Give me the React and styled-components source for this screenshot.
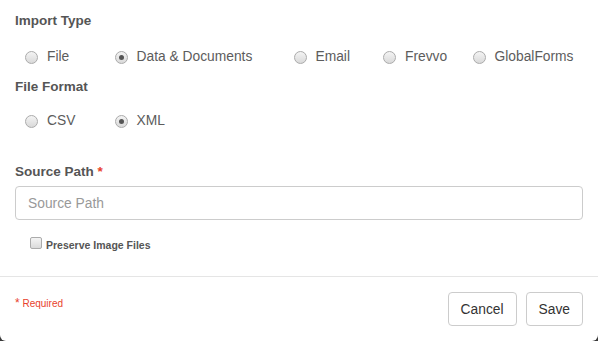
import React, { useState } from "react";
import styled, { createGlobalStyle } from "styled-components";

const GlobalStyle = createGlobalStyle`
  html, body {
    margin: 0;
    padding: 0;
    background: #3a3a3a;
  }
  body {
    font-family: "Liberation Sans", Arial, sans-serif;
  }
`;

const importTypes = [
  { label: "File", span: 1 },
  { label: "Data & Documents", span: 2 },
  { label: "Email", span: 1 },
  { label: "Frevvo", span: 1 },
  { label: "GlobalForms", span: 1 },
];

const formats = [
  { label: "CSV", span: 1 },
  { label: "XML", span: 1 },
];

const RadioGroup = ({ items, value, onChange, top, gap }) => (
  <RadioRow $top={top} $gap={gap}>
    {items.map((item) => (
      <RadioOption key={item.label} $span={item.span} onClick={() => onChange(item.label)}>
        <RadioDot $checked={value === item.label} />
        <RadioText>{item.label}</RadioText>
      </RadioOption>
    ))}
  </RadioRow>
);

const App = () => {
  const [importType, setImportType] = useState("Data & Documents");
  const [format, setFormat] = useState("XML");
  const [preserve, setPreserve] = useState(false);

  return (
    <>
      <GlobalStyle />
      <Modal>
        <Body>
          <SectionTitle>Import Type</SectionTitle>
          <RadioGroup items={importTypes} value={importType} onChange={setImportType} top={20} gap={14} />
          <SectionTitle>File Format</SectionTitle>
          <RadioGroup items={formats} value={format} onChange={setFormat} top={18} gap={0} />
          <FieldLabel>
            Source Path <Star>*</Star>
          </FieldLabel>
          <TextInput placeholder="Source Path" />
          <CheckRow onClick={() => setPreserve(!preserve)}>
            <CheckBox $checked={preserve} />
            <CheckText>Preserve Image Files</CheckText>
          </CheckRow>
        </Body>
        <Footer>
          <RequiredNote>
            <span>*</span> Required
          </RequiredNote>
          <Buttons>
            <Button>Cancel</Button>
            <Button>Save</Button>
          </Buttons>
        </Footer>
      </Modal>
    </>
  );
};
export default App;

const Modal = styled.div`
  width: 598px;
  height: 341px;
  background: #fff;
  border-radius: 0 0 6px 6px;
  display: flex;
  flex-direction: column;
  color: #555;
`;

const Body = styled.div`
  padding: 13px 15px 0 15px;
  height: 263px;
  border-bottom: 1px solid #e5e5e5;
`;

const SectionTitle = styled.div`
  font-size: 13.5px;
  font-weight: bold;
  line-height: 16px;
  color: #555;
`;

const RadioRow = styled.div`
  display: grid;
  grid-template-columns: repeat(6, 89.5px);
  padding: ${(props) => props.$top}px 0 0 10px;
  height: 36px;
  box-sizing: border-box;
  margin-bottom: ${(props) => props.$gap}px;
`;

const RadioOption = styled.label`
  grid-column: span ${(props) => props.$span};
  display: flex;
  align-items: center;
  height: 16px;
  cursor: pointer;
`;

const RadioDot = styled.span`
  width: 11px;
  height: 11px;
  border-radius: 50%;
  border: 1px solid #ababab;
  background: linear-gradient(#f4f4f4, #d9d9d9);
  margin-right: 9px;
  position: relative;
  flex-shrink: 0;

  &::after {
    content: "";
    display: ${(props) => (props.$checked ? "block" : "none")};
    position: absolute;
    left: 3px;
    top: 3px;
    width: 5px;
    height: 5px;
    border-radius: 50%;
    background: #555;
  }
`;

const RadioText = styled.span`
  font-size: 13.8px;
  color: #5c5c5c;
  line-height: 16px;
`;

const FieldLabel = styled.div`
  margin-top: 33px;
  font-size: 13.5px;
  font-weight: bold;
  line-height: 16px;
  color: #555;
`;

const Star = styled.span`
  color: #e8412c;
`;

const TextInput = styled.input`
  display: block;
  margin-top: 6px;
  width: 568px;
  height: 34px;
  box-sizing: border-box;
  border: 1px solid #ccc;
  border-radius: 4px;
  padding: 0 12px;
  font-family: "Liberation Sans", Arial, sans-serif;
  font-size: 13.8px;
  color: #555;
  outline: none;

  &::placeholder {
    color: #999;
  }
`;

const CheckRow = styled.label`
  display: flex;
  align-items: center;
  margin: 16px 0 0 15px;
  cursor: pointer;
`;

const CheckBox = styled.span`
  width: 10px;
  height: 10px;
  border: 1px solid #ababab;
  border-radius: 2px;
  background: ${(props) =>
    props.$checked ? "#555" : "linear-gradient(#f4f4f4, #dadada)"};
  margin-right: 4px;
  position: relative;
  top: -1px;
`;

const CheckText = styled.span`
  font-size: 10.5px;
  font-weight: bold;
  color: #555;
  line-height: 14px;
  padding-top: 2px;
`;

const Footer = styled.div`
  flex: 1;
  display: flex;
  justify-content: space-between;
  align-items: flex-start;
  padding: 15px 15px 0 15px;
`;

const RequiredNote = styled.div`
  margin-top: 4px;
  font-size: 10px;
  color: #e8412c;

  span {
    font-size: 12px;
  }
`;

const Buttons = styled.div`
  display: flex;
  gap: 9px;
`;

const Button = styled.button`
  height: 34px;
  padding: 0 12px;
  background: #fff;
  border: 1px solid #ccc;
  border-radius: 4px;
  font-family: "Liberation Sans", Arial, sans-serif;
  font-size: 13.8px;
  color: #333;
  cursor: pointer;
`;
